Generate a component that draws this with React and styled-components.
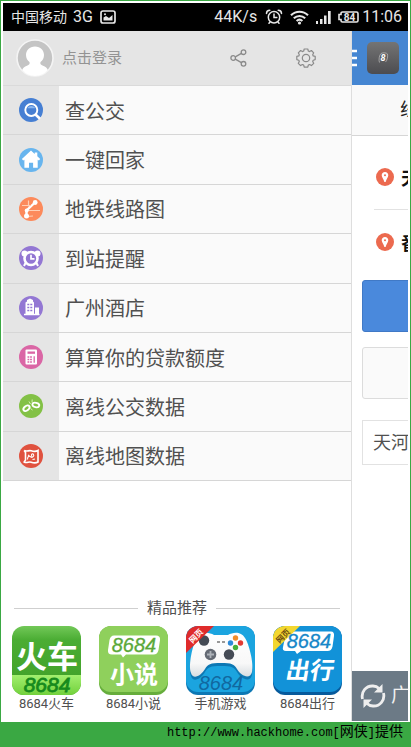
import React from 'react'
import styled, { createGlobalStyle } from 'styled-components'

const GlobalStyle = createGlobalStyle`
  * {
    box-sizing: border-box;
  }

  body {
    margin: 0;
    background: #fff;
    font-family: Roboto, "Noto Sans CJK SC", sans-serif;
    color: #505050;
  }

  button {
    border: 0;
    padding: 0;
    margin: 0;
    background: none;
    color: inherit;
    font: inherit;
    cursor: pointer;
  }

  a {
    color: inherit;
    text-decoration: none;
  }

  svg {
    display: block;
    flex: none;
  }
`

const Page = styled.div`
  display: flex;
  flex-direction: column;
  min-height: 100vh;
  background: #3aa843;
  padding: 1px 1px 0;
`

const Frame = styled.div`
  flex: 1;
  display: flex;
  flex-direction: column;
  background: #fff;
  padding: 2px 2px 1px;
`

const StatusBar = styled.div`
  display: flex;
  align-items: center;
  height: 28px;
  padding: 0 6px 0 8px;
  background: #000;
  color: #e6e6e6;
  font-size: 16px;
  line-height: 28px;
  white-space: nowrap;
`

const Carrier = styled.span`
  font-size: 14px;
  margin-right: 6px;
`

const Network = styled.span`
  margin-right: 7px;
`

const StatusRight = styled.div`
  display: flex;
  align-items: center;
  margin-left: auto;
`

const StatusIcons = styled.div`
  display: flex;
  align-items: center;
  gap: 7px;
  margin: 0 3px 0 8px;
`

const Screen = styled.div`
  flex: 1;
  display: flex;
  overflow: hidden;
`

const Drawer = styled.nav`
  flex: 1;
  min-width: 0;
  display: flex;
  flex-direction: column;
`

const DrawerHeader = styled.div`
  display: flex;
  align-items: center;
  height: 55px;
  padding: 0 11px 0 13px;
  background: #e5e5e5;
  border-bottom: 1px solid #dadada;
`

const Login = styled.button`
  display: flex;
  align-items: center;
  gap: 8px;
  margin-right: auto;
  color: #939393;
  font-size: 15px;
  line-height: 36px;
`

const HeaderButton = styled.button`
  display: flex;
  align-items: center;
  justify-content: center;
  width: 68px;
  height: 54px;
`

const Menu = styled.ul`
  display: grid;
  grid-auto-rows: 1fr;
  height: 395px;
  margin: 0;
  padding: 0;
  list-style: none;
`

const MenuLink = styled.a`
  display: flex;
  height: 100%;
  background: #fafafa;
  border-bottom: 1px solid #d6d6d6;
`

const MenuIcon = styled.span`
  display: flex;
  align-items: center;
  justify-content: center;
  width: 56px;
  background: #e5e5e5;
`

const MenuLabel = styled.span`
  display: flex;
  align-items: center;
  padding: 3px 0 0 6px;
  font-size: 20px;
  line-height: 28px;
`

const Promo = styled.section`
  margin-top: auto;
  padding-bottom: 8px;
`

const PromoTitle = styled.h2`
  display: flex;
  align-items: center;
  gap: 9px;
  margin: 0 11px 7px;
  font-size: 15px;
  font-weight: 400;
  line-height: 22px;

  &::before,
  &::after {
    content: '';
    flex: 1;
    height: 1px;
    background: #cfcfcf;
  }
`

const AppGrid = styled.div`
  display: grid;
  grid-template-columns: repeat(4, 1fr);
`

const AppLink = styled.a`
  display: flex;
  flex-direction: column;
  align-items: center;
  font-size: 13px;
  line-height: 18px;
`

const Peek = styled.main`
  display: flex;
  flex-direction: column;
  width: 57px;
  overflow: hidden;
  white-space: nowrap;
  border-left: 1px solid #dedede;
`

const PeekHeader = styled.header`
  display: flex;
  align-items: center;
  gap: 10px;
  height: 54px;
  margin-left: -1px;
  background: #4586d2;
`

const PeekTab = styled.div`
  height: 51px;
  padding-left: 48px;
  background: #f9f9f9;
  border-bottom: 1px solid #d6d6d6;
  color: #222;
  font-size: 18px;
  line-height: 50px;
`

const Stops = styled.div`
  padding: 9px 0 7px 22px;
`

const Stop = styled.div`
  display: flex;
  align-items: center;
  gap: 7px;
  height: 64px;
  padding-left: 2px;
  color: #111;
  font-size: 18px;
  font-weight: 700;

  & + & {
    border-top: 1px solid #e2e2e2;
  }
`

const PeekButton = styled.button`
  flex: none;
  width: 200px;
  height: 52px;
  margin: 0 0 15px 10px;
  border: 1px solid ${props => (props.$primary ? '#4079c6' : '#dcdcdc')};
  border-radius: 3px;
  background: ${props => (props.$primary ? '#4a89dc' : '#fafafa')};
`

const District = styled.div`
  width: 200px;
  height: 45px;
  margin: 6px 0 0 10px;
  padding-left: 10px;
  border: 1px solid #e2e2e2;
  font-size: 18px;
  line-height: 43px;
`

const CityBar = styled.button`
  display: flex;
  align-items: center;
  gap: 5px;
  height: 50px;
  margin: auto 0 0 -1px;
  padding-left: 9px;
  background: #6c7a86;
  color: #f0f0f0;
  font-size: 19px;
  line-height: 48px;
`

const Credit = styled.footer`
  height: 25px;
  padding-right: 7px;
  color: #000;
  font-family: "Liberation Mono", "Noto Sans CJK SC", monospace;
  font-size: 12px;
  line-height: 20px;
  text-align: right;
  white-space: nowrap;
`

const CreditName = styled.span`
  font-size: 14px;
`

const PictureIcon = () => (
  <svg width="16" height="14" viewBox="0 0 16 14">
    <rect x="1" y="1" width="14" height="12" rx="2" fill="none" stroke="#e6e6e6" strokeWidth="1.7" />
    <path d="M3.5 10.5V7.5L6 6l3 2 3.5-3v5.5z" fill="#e6e6e6" />
    <circle cx="5" cy="4.3" r="1" fill="#e6e6e6" />
  </svg>
)

const AlarmIcon = () => (
  <svg width="18" height="16" viewBox="0 0 18 16" fill="none" stroke="#e6e6e6" strokeWidth="1.5" strokeLinecap="round">
    <circle cx="9" cy="8.3" r="5.7" />
    <path d="M9 5v3.5h2.8M1.5 4.5C1.5 2.8 3 1.4 4.8 1.3M16.5 4.5c0-1.7-1.5-3.1-3.3-3.2M5 13l-1 1.3M13 13l1 1.3" />
  </svg>
)

const WifiIcon = () => (
  <svg width="19" height="15" viewBox="0 0 19 15" fill="none" stroke="#e6e6e6" strokeWidth="2.1">
    <path d="M1 5.3C5.8.6 13.2.6 18 5.3M3.8 8.3c3.3-3.1 8.1-3.1 11.4 0M6.6 11c1.8-1.6 4-1.6 5.8 0" />
    <circle cx="9.5" cy="13" r="1.6" fill="#e6e6e6" stroke="none" />
  </svg>
)

const SignalIcon = () => (
  <svg width="15" height="13" viewBox="0 0 15 13" fill="#e6e6e6">
    <path d="M0 10h2v3H0zM4 8h2.5v5H4zM8 4.5h2.5V13H8zM12 0h2.7v13H12z" />
  </svg>
)

const BatteryIcon = () => (
  <svg width="21" height="12" viewBox="0 0 21 12">
    <path d="M4.5 1h14A1.5 1.5 0 0 1 20 2.5v7a1.5 1.5 0 0 1-1.5 1.5h-14A1.5 1.5 0 0 1 3 9.5v-1H1v-5h2v-1A1.5 1.5 0 0 1 4.5 1z" fill="none" stroke="#e6e6e6" strokeWidth="1.6" />
    <text x="11.5" y="9.5" fontSize="10" fontWeight="700" textAnchor="middle" fill="#e6e6e6">84</text>
  </svg>
)

const Avatar = () => (
  <svg width="38" height="38" viewBox="0 0 38 38">
    <circle cx="19" cy="19" r="18" fill="#c4c4c4" stroke="#f4f4f4" strokeWidth="1.6" />
    <path d="M19 7.5c5.5 0 9 3.7 9 8.5 0 3.3-1.5 5.5-3.5 7-.6 2 .3 2.8 2.5 3.7 2.6 1 4.3 2.3 4.8 4.2A18 18 0 0 1 19 37 18 18 0 0 1 6.2 30.900c.5-1.900 2.200-3.200 4.800-4.200 2.200-.9 3.100-1.700 2.500-3.700-2-1.500-3.500-3.700-3.500-7 0-4.800 3.500-8.500 9-8.500z" fill="#fff" />
  </svg>
)

const ShareIcon = () => (
  <svg width="17" height="18" viewBox="0 0 17 18" fill="none" stroke="#8a8a8a" strokeWidth="1.3">
    <circle cx="3.2" cy="9" r="2.3" />
    <circle cx="13.5" cy="3.2" r="2.3" />
    <circle cx="13.5" cy="14.8" r="2.3" />
    <path d="M5.3 7.9l6.1-3.5M5.3 10.1l6.1 3.5" />
  </svg>
)

const GearIcon = () => (
  <svg width="20" height="20" viewBox="0 0 20 20" fill="none" stroke="#8a8a8a" strokeWidth="1.2" strokeLinejoin="round">
    <path d="M8.2 1h3.6l.5 2 1.300.6 1.800-1.100 2.300 2.300-1 1.900.5 1.200 2 .5v3.200l-2 .6-.5 1.300 1 1.800-2.300 2.300-1.800-1.100-1.300.6-.5 2H8.200l-.5-2-1.300-.6-1.800 1.100-2.300-2.300 1-1.800-.5-1.300-2-.6V8.400l2-.5.5-1.200-1-1.900 2.300-2.300 1.800 1.100L7.700 3z" />
    <circle cx="10" cy="10" r="3.7" />
  </svg>
)

const glyphs = {
  search: (
    <g fill="none" stroke="#fff">
      <circle cx="12.3" cy="12" r="6" strokeWidth="1.9" />
      <path d="M16.5 16.5l4.500 4.200" strokeWidth="2.6" />
      <path d="M8.3 10.200c1.500-3 6.500-3 8 0z" fill="#8bb6ee" stroke="none" />
    </g>
  ),
  home: (
    <path d="M12 2.500l3.700 3.400V4.500h2.600v3.800l2.900 2.700-1.300 1.500-1.200-.8v8h-4.600v-5H10v5H5.400v-8l-1.200.8L2.900 11z" fill="#fff" />
  ),
  metro: (
    <g fill="none" stroke="#fff">
      <path d="M7.500 19v-5.500l8.500-8" strokeWidth="2.400" />
      <path d="M3 8.500h9M8 13.500h13M9.500 3.500v6M8 19.500l6-.5" stroke="#ffd0b5" strokeWidth="1.200" />
      <circle cx="16.200" cy="5.500" r="2.400" fill="#fff" stroke="none" />
      <circle cx="7.500" cy="19" r="2.500" fill="#fff" stroke="none" />
      <circle cx="7.700" cy="13.500" r="2" fill="#fff" stroke="none" />
    </g>
  ),
  alarm: (
    <g>
      <circle cx="5.500" cy="7.500" r="3" fill="#fff" />
      <circle cx="18.500" cy="7.500" r="3" fill="#fff" />
      <path d="M7 16l-2 4M17 16l2 4" stroke="#fff" strokeWidth="2" />
      <circle cx="12" cy="12.500" r="6.500" fill="#9377d3" stroke="#fff" strokeWidth="2.600" />
      <path d="M12 8.800v4h3.500" fill="none" stroke="#fff" strokeWidth="1.700" />
    </g>
  ),
  hotel: (
    <g>
      <path d="M6.500 19V6.500L8 5.500V4l3-1.500L14 4v1.500l1 1V19zM16 11.500h4V19h-4z" fill="#fff" />
      <path d="M8.300 8.500h5M8.300 11.500h5M8.300 14.500h5" stroke="#9377d3" strokeWidth="1.300" strokeDasharray="2 1" />
      <path d="M5 18.500h15.500" stroke="#fff" strokeWidth="1.500" />
    </g>
  ),
  calculator: (
    <g>
      <rect x="6.500" y="4.500" width="11.500" height="15" rx="1" fill="#fff" />
      <rect x="8.500" y="6.500" width="7.500" height="2.300" fill="#da66a5" />
      <path d="M8.500 12h5M8.500 14.500h5M8.500 17h5" stroke="#da66a5" strokeWidth="1.300" strokeDasharray="1.800 .8" />
      <path d="M15.200 11.200v6.500" stroke="#da66a5" strokeWidth="1.300" />
    </g>
  ),
  unlink: (
    <g fill="none" stroke="#fff" strokeWidth="1.900">
      <ellipse cx="7.500" cy="14.300" rx="3.500" ry="2.200" transform="rotate(-38 7.500 14.300)" />
      <ellipse cx="16.800" cy="11" rx="3.500" ry="2.200" transform="rotate(12 16.800 11)" />
      <path d="M11.500 10L10 7.500M13 8.500l.2-3M11.500 14.500l2 1.500" strokeWidth="1" stroke="#d5efb5" />
    </g>
  ),
  map: (
    <g fill="none" stroke="#fff">
      <path d="M5.200 6.500c2.500 1.500 4.500-.5 7 .3 2.300.8 4.300 1.200 6.800-.3v11.500c-2.500 1.500-4.500 1-6.800.2-2.500-.8-4.500 1.200-7-.2l1.300-2V8.500z" strokeWidth="1.600" />
      <path d="M8.500 15.500c0-4 2-3.500 3.500-2.500s3.500-1 2.500-2.500-3 0-1.500 2M9 11l1.500 1M13.500 15.500l2.500-.5" strokeWidth="1.100" />
    </g>
  )
}

const menu = [
  { label: '查公交', icon: 'search', color: '#467fd3' },
  { label: '一键回家', icon: 'home', color: '#68b5ee' },
  { label: '地铁线路图', icon: 'metro', color: '#fc8a5b' },
  { label: '到站提醒', icon: 'alarm', color: '#9377d3' },
  { label: '广州酒店', icon: 'hotel', color: '#9377d3' },
  { label: '算算你的贷款额度', icon: 'calculator', color: '#da66a5' },
  { label: '离线公交数据', icon: 'unlink', color: '#83c146' },
  { label: '离线地图数据', icon: 'map', color: '#e0523f' }
]

const Art = styled.svg`
  width: 69px;
  height: 69px;
`

const Digits = styled.text`
  font-family: "Liberation Sans", sans-serif;
  font-size: ${props => props.$size || 20}px;
  font-style: italic;
  text-anchor: middle;
`

const Han = styled.text`
  font-family: "Noto Sans CJK SC", sans-serif;
  font-weight: 700;
  font-size: ${props => props.$size}px;
  text-anchor: middle;
`

const TrainArt = () => (
  <Art viewBox="0 0 69 69">
    <defs>
      <linearGradient id="train" x1="0" y1="0" x2="0" y2="1">
        <stop offset="0" stopColor="#72c858" />
        <stop offset=".2" stopColor="#4bad34" />
        <stop offset="1" stopColor="#3f9e26" />
      </linearGradient>
      <linearGradient id="trainStrip" x1="0" y1="0" x2="0" y2="1">
        <stop offset="0" stopColor="#a2ef6e" />
        <stop offset="1" stopColor="#72d13c" />
      </linearGradient>
    </defs>
    <rect width="69" height="69" rx="12" fill="url(#train)" />
    <path d="M0 49h69v8a12 12 0 0 1-12 12H12A12 12 0 0 1 0 57z" fill="url(#trainStrip)" />
    <Han x="35" y="42" $size="31" fill="#fff">火车</Han>
    <Digits x="35" y="66" $size="21" fill="#168a1c" stroke="#168a1c" strokeWidth=".8">8684</Digits>
  </Art>
)

const NovelArt = () => (
  <Art viewBox="0 0 69 69">
    <rect width="69" height="69" rx="12" fill="#66ad3c" />
    <rect width="69" height="66" rx="12" fill="#8fd05c" />
    <path d="M15 9.500h42q4.500 0 4 4.500l-1.500 10q-1 4.500-5 4.500H27l-3 3-2-3h-9q-4.500 0-4-4.500l1.500-10q1-4.500 4.500-4.500z" fill="#fff" />
    <Digits x="35" y="26" fill="#5aa838" stroke="#5aa838" strokeWidth=".3">8684</Digits>
    <Han x="35" y="57" $size="24" fill="#fff">小说</Han>
  </Art>
)

const GameArt = () => (
  <Art viewBox="0 0 69 69">
    <defs>
      <clipPath id="tile">
        <rect width="69" height="69" rx="12" />
      </clipPath>
      <linearGradient id="pad" x1="0" y1="0" x2="0" y2="1">
        <stop offset="0" stopColor="#fff" />
        <stop offset=".7" stopColor="#f8f8f8" />
        <stop offset="1" stopColor="#d8dde1" />
      </linearGradient>
    </defs>
    <rect width="69" height="69" rx="12" fill="#0d78b4" />
    <rect width="69" height="66" rx="12" fill="#1ba4df" />
    <path d="M5 49C2 41 7 19 11 14c4-7 12-6 17-3h14c5-3 13-4 17 3 4 6 9 25 7 34-2 8-11 4-15-3-3-5-5-6-16-6s-13 1-16 6c-4 7-12 11-14 4z" fill="#0d78b4" transform="translate(0 1)" />
    <path d="M5 47C2 39 7 17 11 12c4-7 12-6 17-3h14c5-3 13-4 17 3 4 6 9 25 7 34-2 8-11 4-15-3-3-5-5-6-16-6s-13 1-16 6c-4 7-12 11-14 4z" fill="url(#pad)" />
    <circle cx="18" cy="14.500" r="5.200" fill="#454b55" />
    <circle cx="43" cy="28.500" r="5.200" fill="#454b55" />
    <circle cx="24.500" cy="28.500" r="5.800" fill="#656b74" />
    <path d="M24.500 25v7M21 28.500h7" stroke="#aeb3b9" strokeWidth="1.800" />
    <circle cx="49.500" cy="12" r="2.700" fill="#f28c28" />
    <circle cx="44.500" cy="17" r="2.700" fill="#2c8bd8" />
    <circle cx="54.500" cy="17" r="2.700" fill="#e23a32" />
    <circle cx="49.500" cy="21.500" r="2.700" fill="#46b13a" />
    <path d="M31 16h3M36 16h3" stroke="#777" strokeWidth="1.500" />
    <path d="M0 0h28L0 27z" fill="#df2b2b" clipPath="url(#tile)" />
    <Han x="10" y="13" $size="8" fill="#fff" transform="rotate(-45 10 10)">网页</Han>
    <Digits x="35" y="64" fill="#1168a0">8684</Digits>
  </Art>
)

const TravelArt = () => (
  <Art viewBox="0 0 69 69">
    <rect width="69" height="69" rx="12" fill="#075a9c" />
    <rect width="69" height="66" rx="12" fill="#1292d8" />
    <path d="M17 5.500h41q3.500 0 3 4.500l-1.500 10.500q-1 4.500-5 4.500H28l-4 3-2-3h-9q-4 0-3-4l2.500-11.500q1-4 4.500-4z" fill="#fff" />
    <path d="M0 0h27L0 26z" fill="#f3d72f" clipPath="url(#tile)" />
    <Han x="10" y="13" $size="8" fill="#6b4a12" transform="rotate(-45 10 10)">网页</Han>
    <Digits x="36" y="22" fill="#1587c8" stroke="#1587c8" strokeWidth=".3">8684</Digits>
    <Han x="45" y="53" $size="24" fill="#fff" transform="skewX(-10)">出行</Han>
  </Art>
)

const apps = [
  { label: '8684火车', Icon: TrainArt },
  { label: '8684小说', Icon: NovelArt },
  { label: '手机游戏', Icon: GameArt },
  { label: '8684出行', Icon: TravelArt }
]

const HamburgerIcon = () => (
  <svg width="6" height="18" viewBox="0 0 6 18">
    <path d="M0 2h6M0 9h6M0 16h6" stroke="#fff" strokeWidth="2.500" />
  </svg>
)

const LogoIcon = () => (
  <svg width="32" height="32" viewBox="0 0 32 32">
    <defs>
      <linearGradient id="logo" x1="0" y1="0" x2="0" y2="1">
        <stop offset="0" stopColor="#747474" />
        <stop offset="1" stopColor="#4c4c50" />
      </linearGradient>
    </defs>
    <rect width="32" height="32" rx="5" fill="url(#logo)" />
    <path d="M12.500 20.500c-1-2-.3-7.500 1.500-9 2-1.200 5.500-.8 6.500.5.500 2-.2 6.500-2 8" fill="none" stroke="#b4b4b4" strokeWidth=".8" />
    <text x="16" y="19" fontSize="9" fontStyle="italic" fontWeight="700" textAnchor="middle" fill="#fff">8</text>
  </svg>
)

const PinIcon = () => (
  <svg width="18" height="18" viewBox="0 0 18 18">
    <circle cx="9" cy="9" r="9" fill="#ec6a4f" />
    <path d="M9 4c2 0 3.300 1.400 3.300 3.200S10.300 11 9.600 14H8.400C7.700 11 5.700 9 5.700 7.200S7 4 9 4z" fill="#fff" />
    <circle cx="9" cy="7.200" r="1" fill="#ec6a4f" />
  </svg>
)

const RefreshIcon = () => (
  <svg width="26" height="26" viewBox="0 0 26 26" fill="none" stroke="#eee" strokeWidth="2.800">
    <path d="M2.500 16C.8 9 6 2.600 13 3c2.500.1 4.500 1 6 2.500" />
    <path d="M23.500 10C25.200 17 20 23.400 13 23c-2.500-.1-4.500-1-6-2.500" />
    <path d="M22.500 1v8.500H14zM3.500 25v-8.500H12z" fill="#eee" stroke="none" />
  </svg>
)

const App = () => (
  <Page>
    <GlobalStyle />
    <Frame>
      <StatusBar>
        <Carrier>中国移动</Carrier>
        <Network>3G</Network>
        <PictureIcon />
        <StatusRight>
          <span>44K/s</span>
          <StatusIcons>
            <AlarmIcon />
            <WifiIcon />
            <SignalIcon />
            <BatteryIcon />
          </StatusIcons>
          <span>11:06</span>
        </StatusRight>
      </StatusBar>
      <Screen>
        <Drawer>
          <DrawerHeader>
            <Login type="button">
              <Avatar />
              点击登录
            </Login>
            <HeaderButton type="button" aria-label="分享">
              <ShareIcon />
            </HeaderButton>
            <HeaderButton type="button" aria-label="设置">
              <GearIcon />
            </HeaderButton>
          </DrawerHeader>
          <Menu>
            {
              menu.map(item => (
                <li key={item.icon}>
                  <MenuLink href="#">
                    <MenuIcon>
                      <svg width="24" height="24" viewBox="0 0 24 24">
                        <circle cx="12" cy="12" r="12" fill={item.color} />
                        {glyphs[item.icon]}
                      </svg>
                    </MenuIcon>
                    <MenuLabel>{item.label}</MenuLabel>
                  </MenuLink>
                </li>
              ))
            }
          </Menu>
          <Promo>
            <PromoTitle>精品推荐</PromoTitle>
            <AppGrid>
              {
                apps.map(({ label, Icon }) => (
                  <AppLink key={label} href="#">
                    <Icon />
                    {label}
                  </AppLink>
                ))
              }
            </AppGrid>
          </Promo>
        </Drawer>
        <Peek>
          <PeekHeader>
            <HamburgerIcon />
            <LogoIcon />
          </PeekHeader>
          <PeekTab>线路</PeekTab>
          <Stops>
            <Stop><PinIcon />天河</Stop>
            <Stop><PinIcon />番禺</Stop>
          </Stops>
          <PeekButton type="button" $primary aria-label="查询" />
          <PeekButton type="button" aria-label="清除" />
          <District>天河</District>
          <CityBar type="button">
            <RefreshIcon />
            广州
          </CityBar>
        </Peek>
      </Screen>
    </Frame>
    <Credit>
      http://www.hackhome.com[<CreditName>网侠</CreditName>]<CreditName>提供</CreditName>
    </Credit>
  </Page>
)

export default App
